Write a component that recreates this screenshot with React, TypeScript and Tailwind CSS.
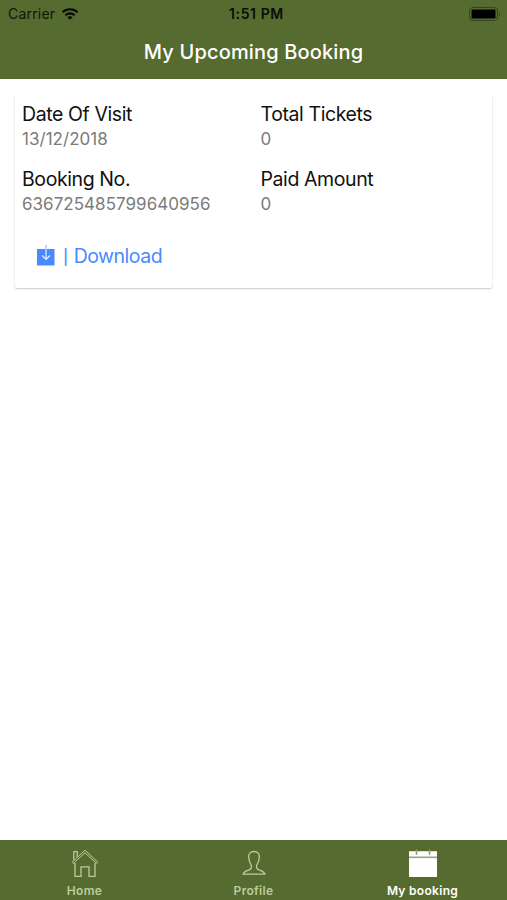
import type { ReactNode } from "react";

type Booking = {
  visitDate: string;
  tickets: number;
  bookingNo: string;
  amount: number;
};

const booking: Booking = {
  visitDate: "13/12/2018",
  tickets: 0,
  bookingNo: "636725485799640956",
  amount: 0,
};

function StatusBar() {
  return (
    <div className="grid h-[27px] grid-cols-3 items-center pl-[8px] pr-[6px] text-[14px] leading-[27px] text-[#10160a]">
      <div className="flex items-center gap-[6px]">
        <span className="tracking-[0.2px]">Carrier</span>
        <svg width="18" height="12" viewBox="0 0 17 12" fill="none" stroke="#080b04" strokeWidth="2.1">
          <path d="M1 4.3C5.2 0.3 11.8 0.3 16 4.3" />
          <path d="M3.9 7.2C6.5 4.8 10.5 4.8 13.1 7.2" />
          <path d="M8.5 11.7 5.9 9.1C7.3 7.8 9.7 7.8 11.1 9.1Z" fill="#080b04" stroke="none" />
        </svg>
      </div>
      <span className="pl-[4px] text-center font-semibold tracking-[0.6px] text-[#0a0e05]">1:51 PM</span>
      <svg className="justify-self-end" width="32" height="14" viewBox="0 0 32 14">
        <rect x="0.5" y="0.5" width="28" height="13" rx="3.5" fill="none" stroke="#35441d" />
        <rect x="2.5" y="2.5" width="24" height="9" rx="1.2" fill="#000" />
        <path d="M30 5v4c1.3-.6 1.3-3.4 0-4Z" fill="#35441d" />
      </svg>
    </div>
  );
}

function Field({ label, value }: { label: string; value: string | number }) {
  return (
    <div className="h-[65px]">
      <div className="text-[19.5px] leading-[26px] tracking-[-0.4px] text-[#111]">{label}</div>
      <div className="text-[17px] leading-[25px] tracking-[0.03px] text-[#7b7b7b]">{value}</div>
    </div>
  );
}

function BookingCard({ item }: { item: Booking }) {
  return (
    <div className="mx-[15px] mt-[15px] h-[194px] rounded-[2px] bg-white pl-[7px] pt-[7px] shadow-[0_1px_2px_rgba(0,0,0,0.22)]">
      <div className="grid grid-cols-[238.5px_1fr]">
        <Field label="Date Of Visit" value={item.visitDate} />
        <Field label="Total Tickets" value={item.tickets} />
        <Field label="Booking No." value={item.bookingNo} />
        <Field label="Paid Amount" value={item.amount} />
      </div>
      <button
        type="button"
        className="ml-[15px] mt-[11px] flex h-[30px] items-center text-[19.5px] tracking-[-0.5px] text-[#488aff]"
      >
        <svg className="mb-[3px]" width="18" height="21" viewBox="0 0 18 21" fill="none">
          <path d="M0 4h17.5v16.5H0Z" fill="#488aff" />
          <path d="M9 0v4" stroke="#9bbcff" strokeWidth="1.3" />
          <path d="M9 4v10M5 10.5l4 3.8 4-3.8" stroke="#e5edff" strokeWidth="1.2" />
        </svg>
        <span className="ml-[8px] text-[15px] leading-[30px] font-medium">|</span>
        <span className="ml-[6px]">Download</span>
      </button>
    </div>
  );
}

function Tab({ label, active, children }: { label: string; active?: boolean; children: ReactNode }) {
  return (
    <button
      type="button"
      className={`flex flex-1 flex-col items-center pt-[7px] text-[12px] font-semibold leading-[16px] tracking-[0.3px] ${
        active ? "text-white" : "text-[#bccb9e]"
      }`}
    >
      <svg width="30" height="32" viewBox="0 0 30 32" fill="none" stroke="currentColor" strokeWidth="1.3">
        {children}
      </svg>
      <span className="mt-[4px]">{label}</span>
    </button>
  );
}

export default function App() {
  return (
    <div className="flex h-[900px] w-[507px] flex-col overflow-hidden bg-white font-['Inter','Liberation_Sans',sans-serif]">
      <header className="h-[79px] bg-[#566b2f]">
        <StatusBar />
        <h1 className="text-center text-[20px] font-medium leading-[50px] tracking-[0.15px] text-white">
          My Upcoming Booking
        </h1>
      </header>
      <main className="flex-1">
        <BookingCard item={booking} />
      </main>
      <nav className="flex h-[60px] bg-[#566b2f]">
        <Tab label="Home">
          <path d="M2 15.3 15 3.2 28 15.3 26.8 16.5 15 5.8 3.2 16.5Z" strokeWidth="1" />
          <path d="M3.8 13V4.7h3.4v5.2" />
          <path d="M5 16v13.3h6V19.8h8v9.5h6V16" />
        </Tab>
        <Tab label="Profile">
          <path d="M15 4.5c-3.7 0-5.6 2.4-5.3 5.8.2 3.4.8 5.2 2.2 7.3.8 1.2.8 4-.8 4.8-2.7 1.4-6.1 1.5-7 4.8h21.8c-.9-3.3-4.3-3.4-7-4.8-1.6-.8-1.6-3.6-.8-4.8 1.4-2.1 2-3.9 2.2-7.3.3-3.4-1.6-5.8-5.3-5.8Z" />
        </Tab>
        <Tab label="My booking" active>
          <path d="M1 4.2h28V30H1Z" fill="currentColor" stroke="none" />
          <path d="M1 10.3h28" stroke="#98a47e" strokeWidth="1.6" />
          <path d="M8.5 2.2v5.5M21.5 2.2v5.5" stroke="#8d9a71" strokeWidth="1.5" />
        </Tab>
      </nav>
    </div>
  );
}
